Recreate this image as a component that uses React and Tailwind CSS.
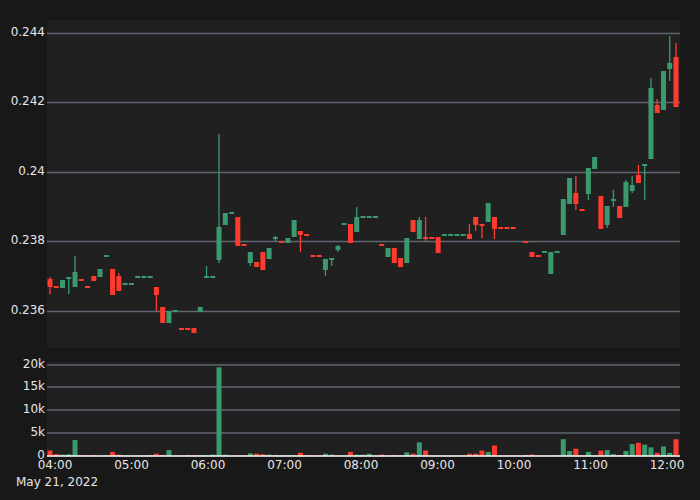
import React from "react";

const G = "#3a9a6e";
const R = "#ff3b30";
// [color, top, bottom, wickTop, wickBottom] in page y; null = empty
const C = [
  ["r",279,287,277,294],["r",286,288],["g",280,288],["g",277,278,277,294],["g",272,287,256,287],
  ["r",279,281],["r",286,288],["r",276,281],["g",269,277],["g",255,257],
  ["r",269,295],["r",276,291,273,291],["g",283,285],["g",283,285],["g",276,278],
  ["g",276,278],["g",276,278],["r",287,295,287,311],["r",307,323],["g",311,323],
  ["g",310,312],["r",328,330],["r",328,330],["r",328,333],["g",307,312],
  ["g",276,278,266,278],["g",276,278],["g",227,260,134,263],["g",213,225],["g",212,214],
  ["r",217,246],["r",244,246],["g",252,263,252,266],["r",262,267],["r",252,270],
  ["g",248,259],["g",237,239,236,242],["r",241,243],["g",238,243],["g",220,237],
  ["r",231,235,231,252],["r",234,236],["r",255,257],["r",255,257],["g",259,270,259,276],
  ["g",258,260,258,266],["g",246,250,245,252],["g",223,225],["r",224,243],["g",217,232,207,232],
  ["g",216,218],["g",216,218],["g",216,218],["r",244,246],["g",248,257],
  ["r",248,263],["r",258,267],["g",238,263],["r",220,232],["g",220,239,217,239],
  ["r",237,239,217,241],["r",237,239],["r",237,253],["g",234,236],["g",234,236],
  ["g",234,236],["g",234,236],["r",234,239,224,239],["r",217,225,217,231],["r",224,226,224,238],
  ["g",203,222],["r",217,229,217,239],["r",227,229],["r",227,229],["r",227,229],
  null,["r",241,243],["r",252,257],["r",255,257],["g",251,253],
  ["g",252,274],["g",251,253],["g",199,235],["g",178,204],["r",193,204,176,210],
  ["r",209,211],["g",168,194,168,200],["g",157,169],["r",196,229],["g",206,225,206,228],
  ["g",199,201,190,207],["r",206,218],["g",182,207,180,207],["g",185,191,176,193],["r",175,183,165,183],
  ["g",164,166,164,200],["g",88,159,78,159],["r",105,113,99,113],["g",71,110],["g",63,69,36,81],
  ["r",57,107,43,107],
];
const V = [1.2,0.4,0.3,0.4,3.5,0.2,0.1,0.2,0,0.1,0.9,0.3,0.1,0,0.1,0.1,0.2,0.5,0.2,1.3,
  0.1,0.1,0.2,0.2,0.2,0.1,0.3,19.5,0.3,0.1,0.1,0.1,0.6,0.5,0.4,0.3,0.2,0.1,0.2,0.1,
  0.7,0.2,0.1,0.1,0.5,0.3,0.1,0.1,0.9,0.3,0.3,0.5,0.1,0.3,0.1,0.2,0.1,0.8,0.5,3,
  1.2,0.1,0.1,0.1,0.1,0.1,0.1,0.5,0.5,1.2,0.9,2.3,0.1,0.1,0.1,0,0.2,0.3,0.1,0.1,
  0.1,0.2,3.7,1.1,1.6,0.1,0.9,0.1,1.2,1.3,0.4,0.2,1.1,2.6,2.9,2.5,1.9,0.7,2.1,0.7,3.7];

const X0 = 50 - 47;
const STEP = 6.26;

function Price() {
  const grid = [13, 82, 152, 221, 291];
  return (
    <svg width="633" height="328" className="block">
      <rect width="633" height="328" fill="#202020" />
      {grid.map((y) => <line key={y} x1="0" x2="633" y1={y + 0.5} y2={y + 0.5} stroke="#5f6670" strokeWidth="1.5" />)}
      {C.map((c, i) => {
        if (!c) return null;
        const x = X0 + i * STEP;
        const col = c[0] === "g" ? G : R;
        const [, t, b, wt, wb] = c;
        return (
          <g key={i}>
            {wt !== undefined && <line x1={x} x2={x} y1={wt - 20} y2={wb - 20} stroke={col} strokeWidth="1.3" />}
            <rect x={x - 2.5} y={t - 20} width="5" height={Math.max(b - t, 2)} fill={col} />
          </g>
        );
      })}
    </svg>
  );
}

function Volume() {
  const grid = [3, 25, 48, 71];
  return (
    <svg width="633" height="95" className="block">
      <rect width="633" height="95" fill="#202020" />
      {grid.map((y) => <line key={y} x1="0" x2="633" y1={y} y2={y} stroke="#5f6670" strokeWidth="1.5" />)}
      {V.map((v, i) => {
        const c = C[i];
        if (!c || v <= 0) return null;
        const h = (v / 20) * 91;
        const x = X0 + i * STEP;
        return <rect key={i} x={x - 2.5} y={94 - h} width="5" height={h} fill={c[0] === "g" ? G : R} />;
      })}
      <line x1="0" x2="633" y1="94" y2="94" stroke="#ffffff" strokeWidth="1.5" />
    </svg>
  );
}

export default function App() {
  const font = { fontFamily: "'DejaVu Sans', sans-serif" };
  const times = ["04:00","05:00","06:00","07:00","08:00","09:00","10:00","11:00","12:00"];
  return (
    <div className="w-[700px] h-[500px] bg-[#181818] text-[#e6e6e6] text-[12px] overflow-hidden" style={font}>
      <div className="flex pt-[20px]">
        <div className="relative w-[47px] h-[328px]">
          {[["0.244",13],["0.242",82],["0.24",152],["0.238",221],["0.236",291]].map(([t, y]) => (
            <span key={t} className="absolute right-[2px] leading-none" style={{ top: y - 7 }}>{t}</span>
          ))}
        </div>
        <Price />
      </div>
      <div className="flex mt-[14px]">
        <div className="relative w-[47px] h-[95px]">
          {[["20k",3],["15k",25],["10k",48],["5k",71],["0",94]].map(([t, y]) => (
            <span key={t} className="absolute right-[2px] leading-none" style={{ top: y - 7 }}>{t}</span>
          ))}
        </div>
        <Volume />
      </div>
      <div className="relative h-[18px] ml-[47px]">
        {times.map((t, i) => (
          <span key={t} className="absolute leading-none -translate-x-1/2 top-[2px]" style={{ left: 8 + i * 76.5 }}>{t}</span>
        ))}
      </div>
      <div className="pl-[16px] pt-[1px] leading-none">May 21, 2022</div>
    </div>
  );
}
